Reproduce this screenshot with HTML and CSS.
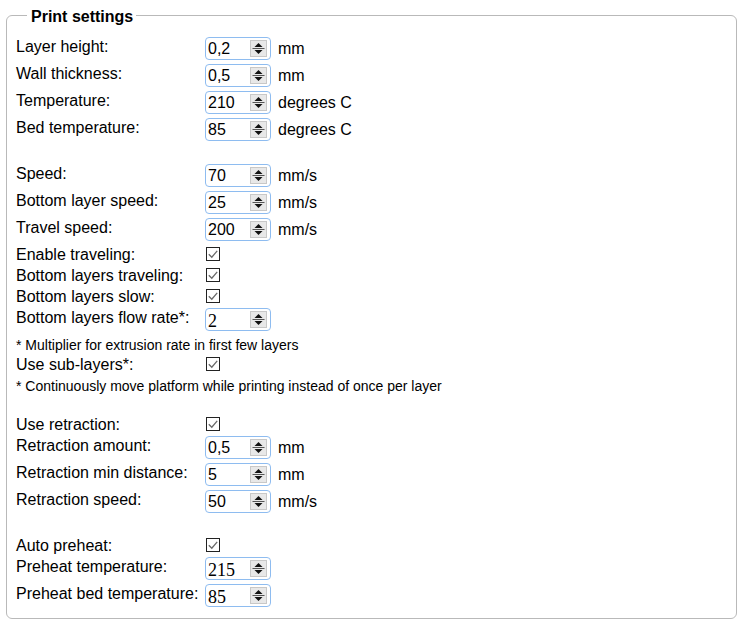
FILE: index.html
```html
<!DOCTYPE html>
<html>
<head>
<meta charset="utf-8">
<link rel="stylesheet" href="styles.css">
</head>
<body>
<svg class="defs" width="0" height="0" aria-hidden="true">
  <defs>
    <symbol id="spin" viewBox="0 0 17 17">
      <rect x="0.5" y="0.5" width="16" height="16" fill="#e8e8e8" stroke="#c8c8c8"/>
      <polygon points="4.5,7 12.5,7 8.5,3" fill="#111"/>
      <line x1="2.5" y1="8.5" x2="14.5" y2="8.5" stroke="#555" stroke-width="1"/>
      <polygon points="4.5,10 12.5,10 8.5,14" fill="#111"/>
    </symbol>
    <symbol id="chk" viewBox="0 0 14 14">
      <rect x="0.5" y="0.5" width="13" height="13" fill="#fff" stroke="#222"/>
      <polyline points="2.8,7.2 5.8,10.2 11.2,3.8" fill="none" stroke="#6a6a6a" stroke-width="1.3"/>
    </symbol>
  </defs>
</svg>
<fieldset class="settings">
  <legend>Print settings</legend>

  <div class="row inp"><span class="label">Layer height:</span><span class="num"><span class="val">0,2</span><svg class="spin"><use href="#spin"/></svg></span><span class="unit">mm</span></div>
  <div class="row inp"><span class="label">Wall thickness:</span><span class="num"><span class="val">0,5</span><svg class="spin"><use href="#spin"/></svg></span><span class="unit">mm</span></div>
  <div class="row inp"><span class="label">Temperature:</span><span class="num"><span class="val">210</span><svg class="spin"><use href="#spin"/></svg></span><span class="unit">degrees C</span></div>
  <div class="row inp"><span class="label">Bed temperature:</span><span class="num"><span class="val">85</span><svg class="spin"><use href="#spin"/></svg></span><span class="unit">degrees C</span></div>

  <div class="spacer"></div>

  <div class="row inp"><span class="label">Speed:</span><span class="num"><span class="val">70</span><svg class="spin"><use href="#spin"/></svg></span><span class="unit">mm/s</span></div>
  <div class="row inp"><span class="label">Bottom layer speed:</span><span class="num"><span class="val">25</span><svg class="spin"><use href="#spin"/></svg></span><span class="unit">mm/s</span></div>
  <div class="row inp"><span class="label">Travel speed:</span><span class="num"><span class="val">200</span><svg class="spin"><use href="#spin"/></svg></span><span class="unit">mm/s</span></div>
  <div class="row cb"><span class="label">Enable traveling:</span><svg class="check"><use href="#chk"/></svg></div>
  <div class="row cb"><span class="label">Bottom layers traveling:</span><svg class="check"><use href="#chk"/></svg></div>
  <div class="row cb"><span class="label">Bottom layers slow:</span><svg class="check"><use href="#chk"/></svg></div>
  <div class="row inp"><span class="label">Bottom layers flow rate*:</span><span class="num"><span class="val serif">2</span><svg class="spin"><use href="#spin"/></svg></span></div>
  <div class="note">* Multiplier for extrusion rate in first few layers</div>
  <div class="row cb"><span class="label">Use sub-layers*:</span><svg class="check"><use href="#chk"/></svg></div>
  <div class="note">* Continuously move platform while printing instead of once per layer</div>

  <div class="spacer"></div>

  <div class="row cb"><span class="label">Use retraction:</span><svg class="check"><use href="#chk"/></svg></div>
  <div class="row inp"><span class="label">Retraction amount:</span><span class="num"><span class="val">0,5</span><svg class="spin"><use href="#spin"/></svg></span><span class="unit">mm</span></div>
  <div class="row inp"><span class="label">Retraction min distance:</span><span class="num"><span class="val">5</span><svg class="spin"><use href="#spin"/></svg></span><span class="unit">mm</span></div>
  <div class="row inp"><span class="label">Retraction speed:</span><span class="num"><span class="val">50</span><svg class="spin"><use href="#spin"/></svg></span><span class="unit">mm/s</span></div>

  <div class="spacer"></div>

  <div class="row cb"><span class="label">Auto preheat:</span><svg class="check"><use href="#chk"/></svg></div>
  <div class="row inp"><span class="label">Preheat temperature:</span><span class="num"><span class="val serif">215</span><svg class="spin"><use href="#spin"/></svg></span></div>
  <div class="row inp"><span class="label">Preheat bed temperature:</span><span class="num"><span class="val serif">85</span><svg class="spin"><use href="#spin"/></svg></span></div>
</fieldset>
</body>
</html>
```
FILE: styles.css
```css
html, body {
  margin: 0;
  padding: 0;
  background: #fff;
}
body {
  font-family: "Liberation Sans", Arial, sans-serif;
  font-size: 16px;
  color: #000;
}
.defs {
  position: absolute;
  width: 0;
  height: 0;
  overflow: hidden;
}
.settings {
  margin: 5px 8px 0 6px;
  padding: 10px 9px 8px 9px;
  border: 1px solid #b9b9b9;
  border-radius: 6px;
  min-width: 0;
}
.settings legend {
  margin-left: 11px;
  padding: 3px 3px 0 4px;
  font-weight: bold;
  font-size: 16px;
  line-height: 18px;
}
.row {
  display: grid;
  grid-template-columns: 189px 66px auto;
  align-items: start;
}
.row.inp {
  height: 27px;
}
.row.cb {
  height: 21px;
}
.label {
  padding-top: 2px;
  line-height: 18px;
  white-space: nowrap;
}
.num {
  margin-top: 1px;
  box-sizing: border-box;
  width: 66px;
  height: 23px;
  border: 1px solid #8ebcf0;
  border-radius: 4px;
  display: flex;
  align-items: center;
  padding: 0 3px 0 2px;
}
.val {
  flex: 1;
  line-height: 18px;
}
.val.serif {
  font-family: "Liberation Serif", "Times New Roman", serif;
  font-size: 18px;
  padding-top: 3px;
}
.spin {
  width: 17px;
  height: 17px;
  display: block;
}
.unit {
  padding: 4px 0 0 7px;
  line-height: 18px;
  white-space: nowrap;
}
.check {
  margin-top: 3px;
  margin-left: 1px;
  width: 14px;
  height: 14px;
  display: block;
}
.note {
  font-size: 14px;
  line-height: 16px;
  padding: 3px 0 1px;
}
.spacer {
  height: 19px;
}
```
